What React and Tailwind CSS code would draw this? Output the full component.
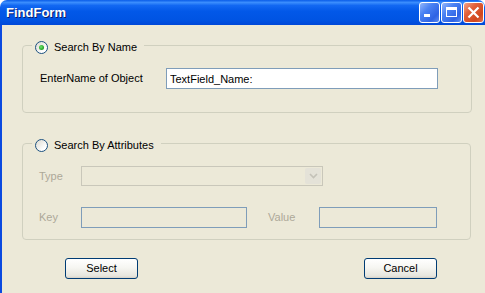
import React from 'react';

const Radio = ({ checked }) => (
    <span className="flex h-[13px] w-[13px] shrink-0 items-center justify-center rounded-full border border-[#1C5180] bg-[linear-gradient(135deg,#DCDAD0,#FFFFFF_75%)]">
        {checked && (
            <span className="h-[5px] w-[5px] rounded-full bg-[radial-gradient(circle_at_40%_40%,#6FE36F,#21A121_70%)]" />
        )}
    </span>
);

const CaptionButton = ({ kind }) => {
    const bg =
        kind === 'close'
            ? 'bg-[linear-gradient(135deg,#F2A48C_0%,#E2603A_35%,#D0461D_75%,#E0704E_100%)]'
            : 'bg-[linear-gradient(135deg,#93B6FB_0%,#4A82F3_35%,#2E63E4_75%,#5C8DF0_100%)]';
    return (
        <div className={`flex h-[21px] w-[21px] items-center justify-center rounded-[3px] border border-white ${bg}`}>
            <svg width="19" height="19" viewBox="0 0 19 19">
                {kind === 'min' && <rect x="4" y="11" width="6" height="3" fill="#fff" />}
                {kind === 'max' && (
                    <g fill="#fff">
                        <rect x="4" y="4" width="11" height="3" />
                        <rect x="4" y="4" width="1" height="10" />
                        <rect x="14" y="4" width="1" height="10" />
                        <rect x="4" y="13" width="11" height="1" />
                    </g>
                )}
                {kind === 'close' && (
                    <path d="M4.5 4.5 L14.5 14.5 M14.5 4.5 L4.5 14.5" stroke="#fff" strokeWidth="2.2" />
                )}
            </svg>
        </div>
    );
};

const XpButton = ({ children }) => (
    <button className="flex h-[21px] w-[73px] items-center justify-center rounded-[3px] border border-[#003C74] bg-[linear-gradient(to_bottom,#FFFFFF_0%,#F6F6F2_45%,#E6E5DD_90%,#D6D0C5_100%)] text-[11px] text-black">
        {children}
    </button>
);

const App = () => {
    return (
        <div className="h-[293px] w-[485px] overflow-hidden bg-white font-['Liberation_Sans',Arial,sans-serif]">
            <div className="flex h-[293px] flex-col overflow-hidden rounded-t-[7px]">
                <div className="flex h-[25px] shrink-0 items-center justify-between pl-[6px] pr-[1px] bg-[linear-gradient(to_bottom,#0A5DE8_0%,#3A8DFD_10%,#1268F2_22%,#0258E8_45%,#0054E3_80%,#0048D8_100%)]">
                    <span className="text-[13px] font-bold text-white [text-shadow:1px_1px_0_#0A1E6A]">FindForm</span>
                    <div className="flex gap-[1px]">
                        <CaptionButton kind="min" />
                        <CaptionButton kind="max" />
                        <CaptionButton kind="close" />
                    </div>
                </div>

                <div className="flex-1 border-l-[2px] border-[#0B4AE0] bg-[#ECE9D8] pl-[20px] pt-[11px] text-[11px]">
                    <fieldset className="h-[77px] w-[450px] rounded-[4px] border border-[#D0D0BF]">
                        <legend className="ml-[9px] flex h-[18px] items-end gap-[6px] pl-[3px] pr-[7px]">
                            <Radio checked />
                            <span className="leading-[13px] text-black">Search By Name</span>
                        </legend>
                        <div className="mt-[14px] flex h-[21px] items-center pl-[17px]">
                            <span className="w-[126px] text-black">EnterName of Object</span>
                            <input
                                readOnly
                                defaultValue="TextField_Name:"
                                className="h-[21px] w-[272px] border border-[#7F9DB9] bg-white px-[3px] text-[11px] text-black outline-none"
                            />
                        </div>
                    </fieldset>

                    <fieldset className="mt-[21px] h-[106px] w-[449px] rounded-[4px] border border-[#D0D0BF]">
                        <legend className="ml-[9px] flex h-[18px] items-end gap-[6px] pl-[3px] pr-[7px]">
                            <Radio />
                            <span className="leading-[13px] text-black">Search By Attributes</span>
                        </legend>
                        <div className="mt-[14px] flex h-[20px] items-center pl-[16px]">
                            <span className="w-[42px] text-[#ACA899]">Type</span>
                            <div className="flex h-[20px] w-[242px] items-center justify-end border border-[#C9C7BA] pr-[1px]">
                                <div className="flex h-[16px] w-[16px] items-center justify-center rounded-[2px] bg-[#E4E2D8]">
                                    <svg width="9" height="6" viewBox="0 0 9 6">
                                        <path d="M1 1 L4.5 4.5 L8 1" fill="none" stroke="#C4C2B8" strokeWidth="1.6" />
                                    </svg>
                                </div>
                            </div>
                        </div>
                        <div className="mt-[21px] flex h-[21px] items-center pl-[16px]">
                            <span className="w-[42px] text-[#ACA899]">Key</span>
                            <div className="h-[21px] w-[166px] border border-[#7F9DB9]" />
                            <span className="ml-[21px] w-[51px] text-[#ACA899]">Value</span>
                            <div className="h-[21px] w-[118px] border border-[#7F9DB9]" />
                        </div>
                    </fieldset>

                    <div className="ml-[43px] mt-[18px] flex w-[372px] justify-between">
                        <XpButton>Select</XpButton>
                        <XpButton>Cancel</XpButton>
                    </div>
                </div>
            </div>
        </div>
    );
};

export default App;
